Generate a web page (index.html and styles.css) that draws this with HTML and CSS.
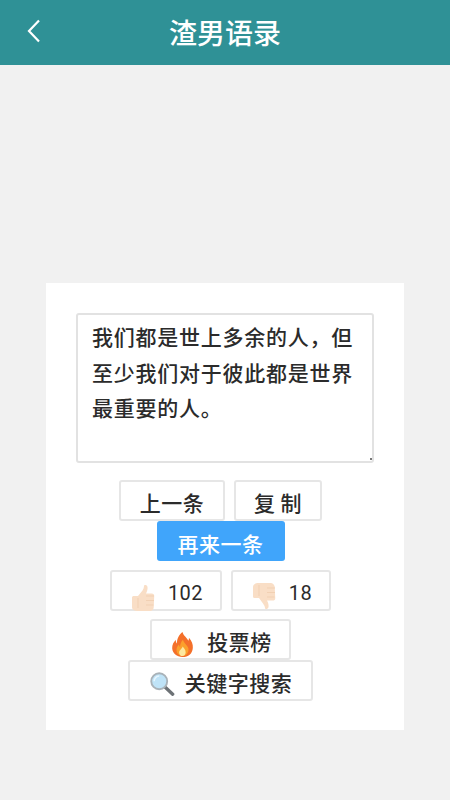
FILE: index.html
```html
<!DOCTYPE html>
<html lang="zh">
<head>
<meta charset="utf-8">
<title>渣男语录</title>
<link rel="stylesheet" href="styles.css">
</head>
<body>
<header class="bar">
  <svg class="back" viewBox="0 0 16 26" aria-hidden="true"><path d="M13 2.500 3 13l10 10.500"/></svg>
  <h1 class="title">渣男语录</h1>
</header>
<main class="page">
  <section class="card">
    <div class="quote-box">
      <textarea class="quote" readonly>我们都是世上多余的人，但至少我们对于彼此都是世界最重要的人。</textarea>
    </div>
    <div class="row row-first">
      <button class="btn w-prev">上一条</button>
      <button class="btn w-copy">复 制</button>
    </div>
    <div class="row">
      <button class="btn primary">再来一条</button>
    </div>
    <div class="row row-votes">
      <button class="btn w-up">
        <svg class="ico thumb-up" viewBox="0 0 28 28" aria-hidden="true">
          <path fill="#f9dec6" d="M3 13.500c0-1 .8-1.500 2-1.500h4l4.500-5.500c1-1.500 1.500-3 1.500-4.500 0-1.500 3-1.500 3.500 1 .4 2.300-.5 4.500-1.500 6.500h5.500c2.300 0 3 1.500 2.700 3l-.5 11c-.2 2-1.500 3.500-3.500 3.500H9c-3 0-6-1-6-4z"/>
          <path fill="none" stroke="#f1d0b3" stroke-width="1" d="M17 12h8M17 16.500h8M17 21h7.500M9 14v10"/>
        </svg>
        <span class="count">102</span>
      </button>
      <button class="btn w-down">
        <svg class="ico thumb-down" viewBox="0 0 28 28" aria-hidden="true">
          <path fill="#f9dec6" d="M3 13.500c0 1 .8 1.500 2 1.500h4l4 5.500c1 1.500 2 3 2 4.500 0 1.500 3 1.500 3.500-1 .4-2.300-.5-4.500-1.500-6.500h5.500c2.300 0 3-1.500 2.700-3l-.5-11C24 1.500 22.700 0 20.700 0H9C6 0 3 1 3 4z"/>
          <path fill="none" stroke="#f1d0b3" stroke-width="1" d="M17 5h8M17 9.500h8M17 14h7.500M9 2v11"/>
        </svg>
        <span class="count">18</span>
      </button>
    </div>
    <div class="row row-rank">
      <button class="btn w-rank">
        <svg class="ico flame" viewBox="0 0 28 28" aria-hidden="true">
          <path fill="#f4702a" d="M14 1c1 4 4 5 6 9 .6-1 .8-2 .7-3 3 3.500 4.300 7 4 10.500C24.300 23.500 20 27 14 27S3.700 23.500 3.300 18c-.3-4 2-7 3.700-9 0 1.500.3 3 1.300 4C8 8 10.500 3.500 14 1z"/>
          <path fill="#fba02c" d="M14.500 9c.5 3 4 5 5.500 8.500 1 3.500-1.500 8.500-6 8.500s-7-4-6-8c.5-2 1.500-3 2.500-4 0 1 .3 2 1 2.500 0-2.500 1-5.500 3-7.500z"/>
          <path fill="#fde8a0" d="M14.300 16c.5 1.500 3 3 3 6 0 2.500-1.500 4-3.300 4s-3.500-1.500-3.500-3.800c0-2.500 3-3.700 3.800-6.200z"/>
        </svg>
        <span class="label">投票榜</span>
      </button>
    </div>
    <div class="row">
      <button class="btn w-search">
        <svg class="ico glass" viewBox="0 0 28 28" aria-hidden="true">
          <path stroke="#6d7276" stroke-width="3.600" stroke-linecap="round" d="m17.500 17.500 8 7.500"/>
          <circle cx="11" cy="11" r="8.600" fill="#bfe3f7" stroke="#a9b2b8" stroke-width="2"/>
          <path fill="none" stroke="#e6f6ff" stroke-width="1.600" d="M5.500 11c0-3 2.500-5.500 5.500-5.500"/>
        </svg>
        <span class="label">关键字搜索</span>
      </button>
    </div>
  </section>
</main>
</body>
</html>
```
FILE: styles.css
```css
* { box-sizing: border-box; }
html, body { margin: 0; height: 100%; }
body {
  background: #f1f1f1;
  font-family: "Noto Sans CJK SC", "Noto Sans", sans-serif;
  color: #2b2b2b;
}
.bar {
  height: 65px;
  background: #2f9196;
  display: flex;
  align-items: center;
  justify-content: center;
  position: relative;
}
.back {
  position: absolute;
  left: 26px;
  top: 18px;
  width: 16px;
  height: 26px;
}
.back path { fill: none; stroke: #fff; stroke-width: 2.200; }
.title {
  margin: 0 0 2px;
  font-size: 28px;
  font-weight: 500;
  color: #fff;
  line-height: 1;
}
.page { padding: 218px 46px 0; }
.card {
  background: #fff;
  height: 447px;
  padding-top: 30px;
  display: flex;
  flex-direction: column;
  align-items: center;
}
.quote-box {
  position: relative;
  flex: none;
  width: 298px;
  height: 150px;
}
.quote-box::after {
  content: "";
  position: absolute;
  right: 2px;
  bottom: 3px;
  width: 2px;
  height: 2px;
  background: #777;
}
.quote {
  display: block;
  width: 100%;
  height: 100%;
  padding: 4px 15px 5px 14px;
  border: 2px solid #e2e2e2;
  border-radius: 3px;
  font: 500 21px/35.500px "Noto Sans CJK SC", sans-serif;
  letter-spacing: .75px;
  color: #2b2b2b;
  background: #fff;
  outline: none;
  resize: none;
  overflow: hidden;
}
.row {
  display: flex;
  justify-content: center;
  gap: 9px;
  margin-right: 9px;
}
.row-first { margin-top: 17px; }
.row-votes { margin-top: 9px; }
.row-rank { margin-top: 8px; }
.btn {
  height: 41px;
  padding: 4px 0 0;
  border: 2px solid #e6e6e6;
  border-radius: 3px;
  background: #fff;
  color: #2b2b2b;
  font: 500 21px/1 "Noto Sans CJK SC", sans-serif;
  letter-spacing: .5px;
  display: flex;
  align-items: center;
  justify-content: center;
}
.primary {
  width: 128px;
  height: 40px;
  border: none;
  background: #40a5fb;
  color: #fff;
}
.w-prev { width: 106px; }
.w-copy { width: 88px; }
.w-up { width: 112px; }
.w-down { width: 100px; }
.w-rank { width: 141px; }
.w-search { width: 185px; }
.ico { flex: none; width: 26px; height: 26px; }
.thumb-up { width: 28px; height: 28px; margin: 10px 11px 0 0; }
.thumb-down { width: 28px; height: 28px; margin: 8px 11px 0 0; }
.flame { width: 27px; height: 27px; margin: 5px 11px 0 0; }
.glass { margin: 3px 10px 0 0; }
.count { font: 400 20px/1 "Roboto", sans-serif; letter-spacing: .5px; }
```
